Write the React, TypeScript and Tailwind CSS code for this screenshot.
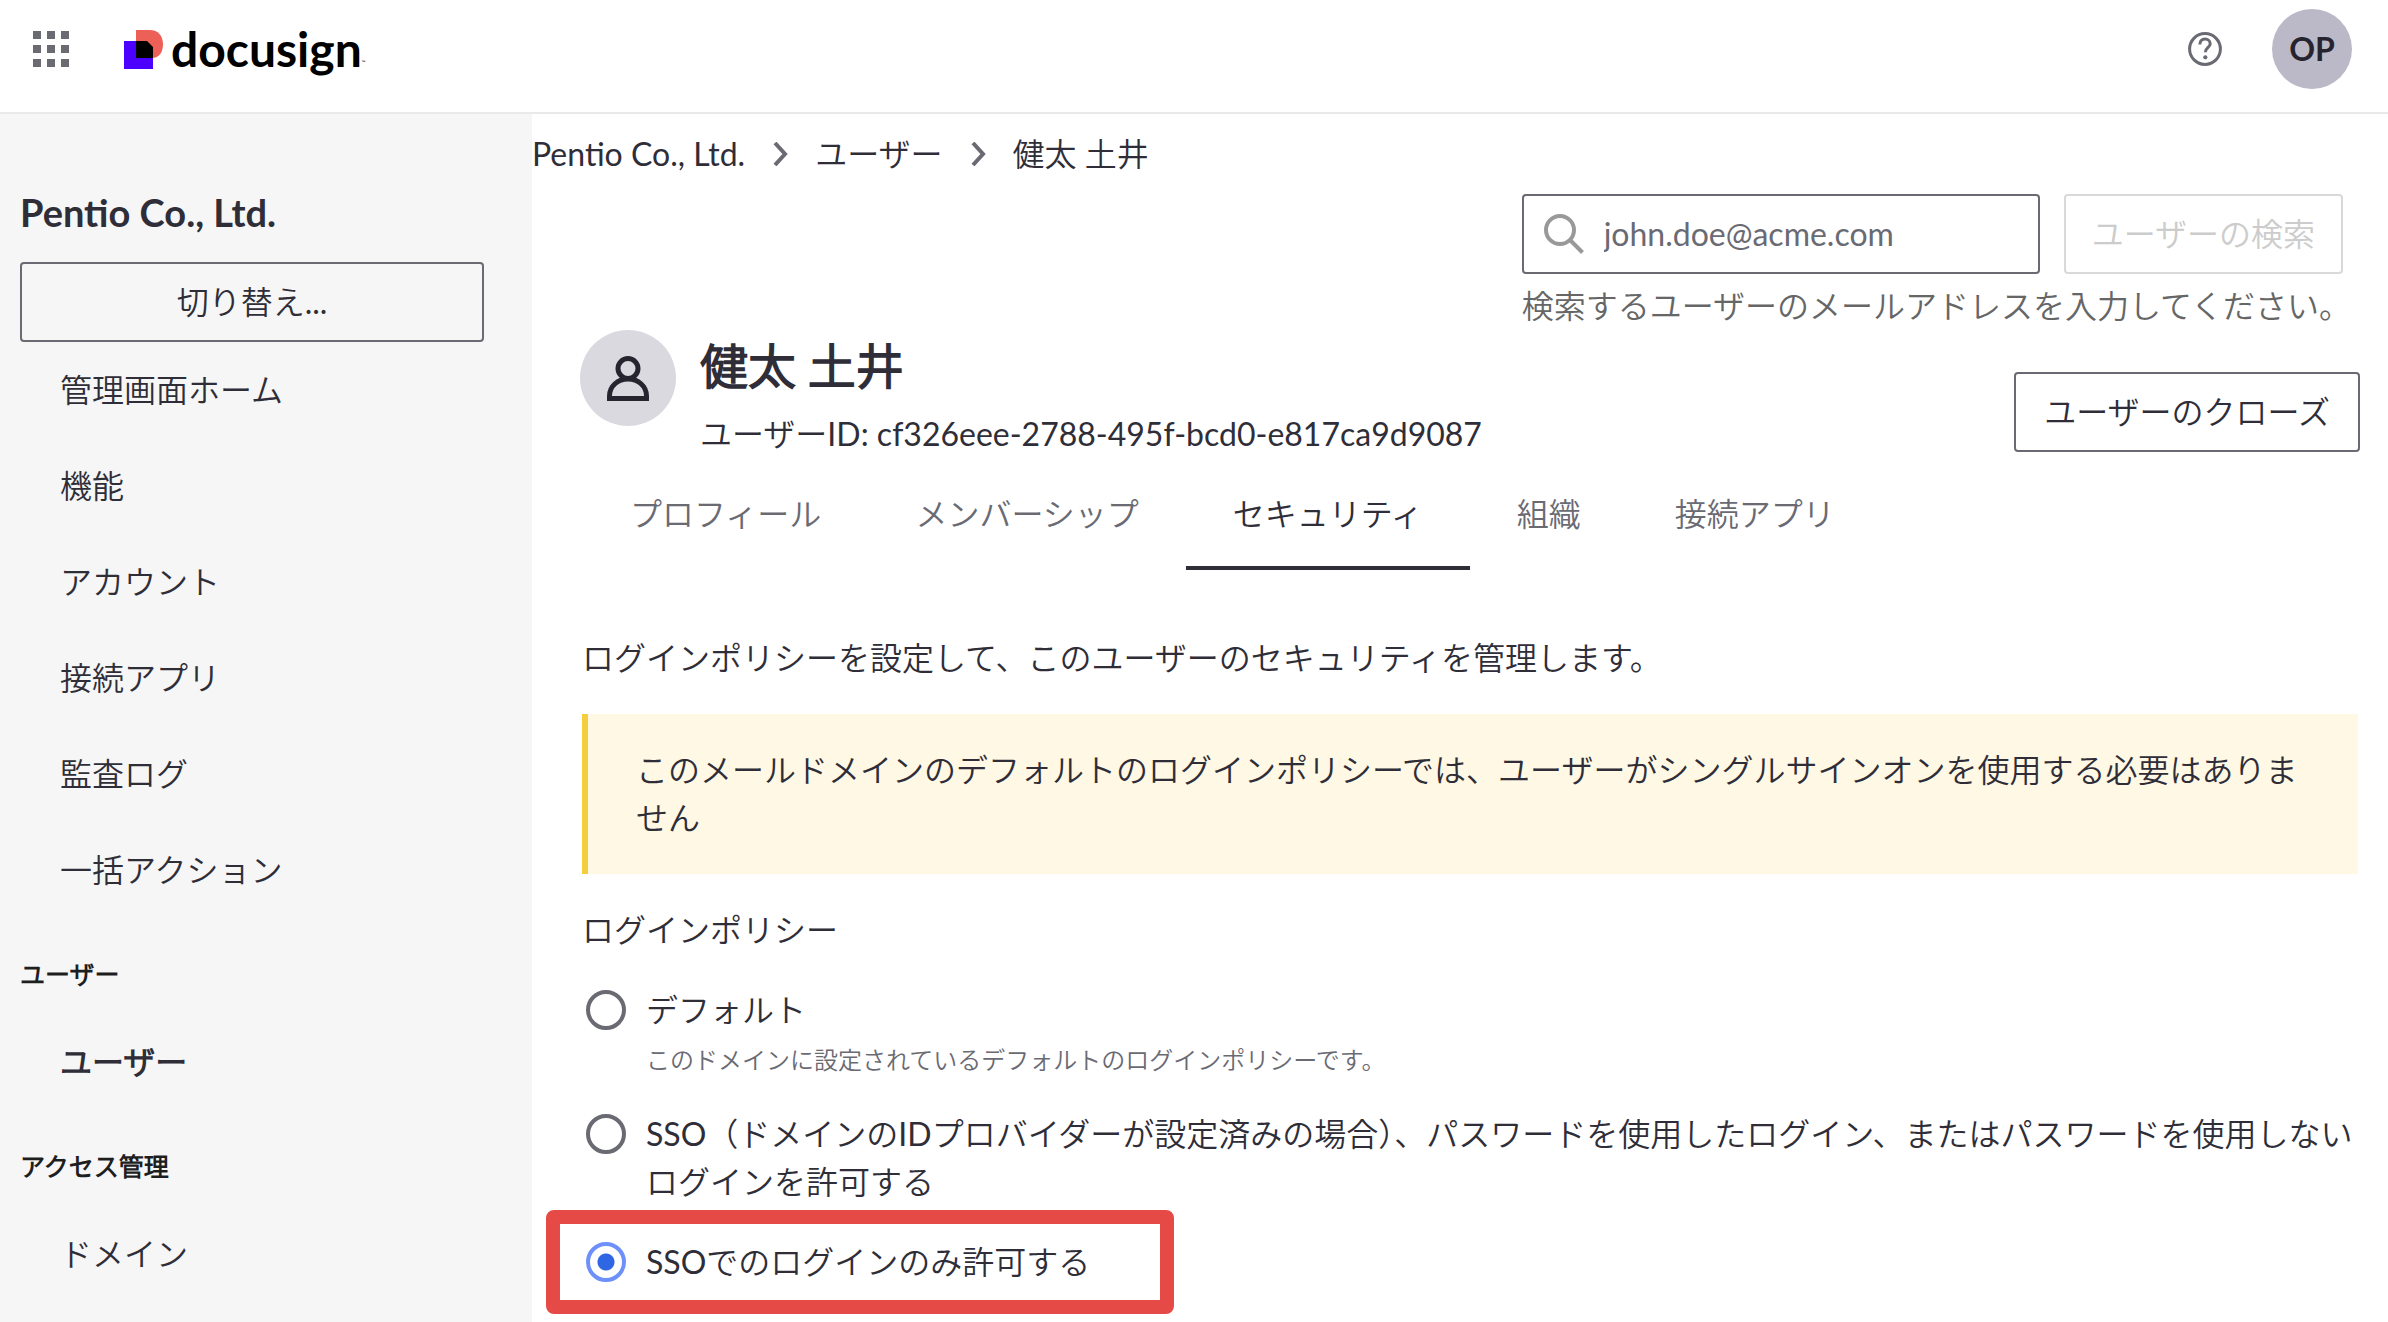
import React from "react";

const topLinks = ["管理画面ホーム", "機能", "アカウント", "接続アプリ", "監査ログ", "一括アクション"];

const tabs = [
  { label: "プロフィール", active: false },
  { label: "メンバーシップ", active: false },
  { label: "セキュリティ", active: true },
  { label: "組織", active: false },
  { label: "接続アプリ", active: false },
];

function Logo() {
  return (
    <span className="flex items-center">
      <svg viewBox="0 0 40 39" className="h-[39px] w-10" aria-hidden="true">
        <path d="M0 11h29v28H0z" fill="#4c00ff" />
        <path d="M12 0h14c8 0 13 6 13 14.200S35 28 28 28H12z" fill="#ed6058" />
        <path d="M12 11h11l6 6v11H12z" fill="#000" />
      </svg>
      <span className="ml-[7px] text-[48px] leading-[60px] font-bold text-black">docusign</span>
      <span className="self-end pb-[14px] text-[5px] leading-none text-black">™</span>
    </span>
  );
}

function NavLink({ label, active = false }: { label: string; active?: boolean }) {
  return (
    <a href="#" className={active ? "block py-6 pl-10 font-bold" : "block py-6 pl-10"}>
      {label}
    </a>
  );
}

function NavHeading({ children }: { children: React.ReactNode }) {
  return <h3 className="mt-8 mb-4 text-[25px] leading-12 font-bold text-[#1e1e1e]">{children}</h3>;
}

function Radio({ id, checked, children, hint }: { id: string; checked?: boolean; children: React.ReactNode; hint?: string }) {
  return (
    <div className="flex items-start gap-5">
      <input
        type="radio"
        id={id}
        name="policy"
        defaultChecked={checked}
        className="mt-1 size-10 shrink-0 appearance-none rounded-full border-4 border-[#6a6a73] bg-white checked:border-[#6d90fb] checked:bg-[radial-gradient(circle,#2f66e4_8px,#fff_9px)]"
      />
      <div>
        <label htmlFor={id} className="block leading-12">
          {children}
        </label>
        {hint && <p className="mt-2 text-2xl leading-9 text-[#6a6a73]">{hint}</p>}
      </div>
    </div>
  );
}

function Chevron() {
  return (
    <svg viewBox="0 0 24 24" className="size-6" fill="none" stroke="#6a6a73" strokeWidth="4" aria-hidden="true">
      <path d="M7 1l10 11L7 23" />
    </svg>
  );
}

export default function App() {
  return (
    <div className="flex h-screen flex-col overflow-hidden bg-white font-[Lato,'Noto_Sans_CJK_JP_DemiLight','Noto_Sans_CJK_JP_Light','Noto_Sans_CJK_JP',sans-serif] text-[32px] leading-12 text-[#2f2e38]">
      <header className="flex h-[114px] shrink-0 items-center border-b-2 border-[#e9e9e9] pr-9 pb-[14px] pl-[33px]">
        <button aria-label="アプリ" className="grid grid-cols-3 gap-[6px]">
          {Array.from({ length: 9 }, (_, i) => (
            <span key={i} className="size-2 bg-[#6a6a73]" />
          ))}
        </button>
        <a href="#" className="ml-[55px]">
          <Logo />
        </a>
        <button aria-label="ヘルプ" className="mr-[50px] ml-auto">
          <svg viewBox="0 0 34 34" className="size-[34px]" fill="none" stroke="#6a6a73" strokeWidth="3">
            <circle cx="17" cy="17" r="15.400" />
            <path d="M11.800 12.500c0-3.800 2.400-5.400 5.200-5.400s5.200 1.700 5.200 4.600c0 3.800-4.900 4.300-4.900 8.500" />
            <circle cx="17.300" cy="25.300" r="2.100" fill="#6a6a73" stroke="none" />
          </svg>
        </button>
        <button className="size-20 rounded-full bg-[#bbb9c7] font-bold text-[#26242f]">OP</button>
      </header>

      <div className="flex min-h-0 flex-1">
        <nav className="w-[532px] shrink-0 bg-[#f6f6f6] px-5 pt-[74px]">
          <h2 className="text-[38px] leading-12 font-bold">Pentio Co., Ltd.</h2>
          <button className="mt-[26px] block h-20 w-[464px] rounded border-2 border-[#6a6a73]">切り替え...</button>
          <div>
            {topLinks.map((label) => (
              <NavLink key={label} label={label} />
            ))}
          </div>
          <NavHeading>ユーザー</NavHeading>
          <NavLink label="ユーザー" active />
          <NavHeading>アクセス管理</NavHeading>
          <NavLink label="ドメイン" />
        </nav>

        <main className="min-w-0 flex-1 pt-4">
          <nav className="flex items-center gap-[23px]">
            <a href="#">Pentio Co., Ltd.</a>
            <Chevron />
            <a href="#">ユーザー</a>
            <Chevron />
            <span>健太 土井</span>
          </nav>

          <div className="mt-4 flex justify-end pr-[45px]">
            <form className="grid grid-cols-[auto_auto] gap-x-6">
              <div className="flex h-20 w-[518px] items-center gap-5 rounded border-2 border-[#6a6a73] px-5">
                <svg viewBox="0 0 40 40" className="size-10 shrink-0" fill="none" stroke="#999" strokeWidth="4">
                  <circle cx="16" cy="16" r="14" />
                  <path d="M26 26l12.500 12.500" />
                </svg>
                <input
                  type="email"
                  aria-label="メールアドレス"
                  placeholder="john.doe@acme.com"
                  className="min-w-0 flex-1 outline-none placeholder:text-[#6a6a73]"
                />
              </div>
              <button disabled className="h-20 rounded border-2 border-[#d9d9d9] px-[26px] text-[#cccccc]">
                ユーザーの検索
              </button>
              <p className="col-span-2 mt-2 w-0 whitespace-nowrap text-[#666]">検索するユーザーのメールアドレスを入力してください。</p>
            </form>
          </div>

          <div className="flex items-start pr-7 pl-12">
            <span className="flex size-24 items-center justify-center rounded-full bg-[#d9d9df]">
              <svg viewBox="0 0 42 45" className="h-[45px] w-[42px]" fill="none" stroke="#26242f" strokeWidth="5">
                <circle cx="21" cy="12.500" r="10" />
                <path d="M2.500 42.500V40C2.500 30 11 23 21 23S39.500 30 39.500 40v2.500z" />
              </svg>
            </span>
            <div className="ml-6">
              <h1 className="text-5xl leading-[72px] font-bold">健太 土井</h1>
              <p className="mt-2">ユーザーID: cf326eee-2788-495f-bcd0-e817ca9d9087</p>
            </div>
            <button className="mt-[42px] ml-auto h-20 rounded border-2 border-[#6a6a73] px-7">ユーザーのクローズ</button>
          </div>

          <div role="tablist" className="mt-2 flex pl-[51px]">
            {tabs.map((t) => (
              <button
                key={t.label}
                role="tab"
                aria-selected={t.active}
                className={
                  t.active
                    ? "border-b-4 border-[#2f2e38] px-[47px] pt-6 pb-7"
                    : "border-b-4 border-transparent px-[47px] pt-6 pb-7 text-[#6a6a73]"
                }
              >
                {t.label}
              </button>
            ))}
          </div>

          <div className="pr-[30px] pl-[50px]">
            <p className="mt-16">ログインポリシーを設定して、このユーザーのセキュリティを管理します。</p>
            <div className="mt-8 border-l-6 border-[#f5ce3e] bg-[#fff8e5] px-12 py-8">
              このメールドメインのデフォルトのログインポリシーでは、ユーザーがシングルサインオンを使用する必要はありません
            </div>
            <fieldset className="mt-8">
              <legend>ログインポリシー</legend>
              <div className="mt-8 flex flex-col pl-1">
                <Radio id="default" hint="このドメインに設定されているデフォルトのログインポリシーです。">
                  デフォルト
                </Radio>
                <div className="mt-8">
                  <Radio id="sso-password">
                    SSO（ドメインのIDプロバイダーが設定済みの場合）、パスワードを使用したログイン、またはパスワードを使用しないログインを許可する
                  </Radio>
                </div>
                <div className="mt-1 -ml-10 w-[628px] rounded-lg border-14 border-[#e54a46] py-[14px] pl-[26px]">
                  <Radio id="sso-only" checked>
                    SSOでのログインのみ許可する
                  </Radio>
                </div>
              </div>
            </fieldset>
          </div>
        </main>
      </div>
    </div>
  );
}
